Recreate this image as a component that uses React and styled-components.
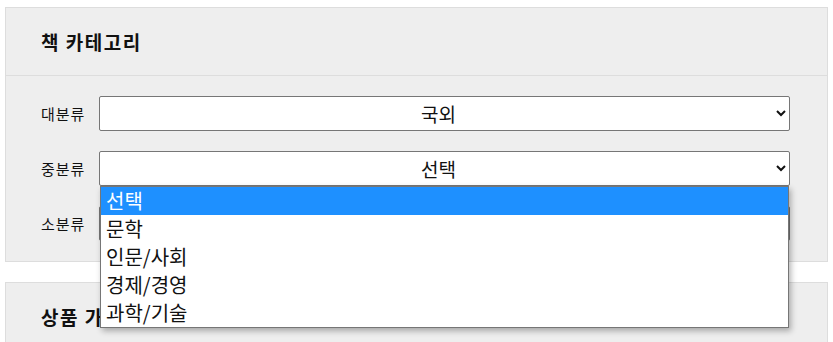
import React from 'react'
import styled, { createGlobalStyle } from 'styled-components'

const GlobalStyle = createGlobalStyle`
  body {
    margin: 0;
    background: #fff;
    font-family: "Noto Sans CJK KR", "Noto Sans", sans-serif;
    color: #111;
  }
`

const Page = styled.div`
  padding: 7px 5px 0 5px;
  display: flex;
  flex-direction: column;
  gap: 20px;
  height: 342px;
  box-sizing: border-box;
  overflow: hidden;
`

const Card = styled.section`
  background: #eeeeee;
  border: 1px solid #dddddd;
  flex-shrink: 0;
`

const CardHeader = styled.h2`
  margin: 0;
  height: 67px;
  display: flex;
  align-items: center;
  padding-left: 35px;
  font-size: 19px;
  letter-spacing: 1.5px;
  font-weight: 700;
  border-bottom: 1px solid #dddddd;
`

const CardBody = styled.div`
  padding: 20px 37px 20px 35px;
  display: flex;
  flex-direction: column;
  gap: 20px;
`

const Row = styled.div`
  display: flex;
  align-items: center;
  position: relative;
`

const Label = styled.label`
  width: 58px;
  font-size: 15px;
  letter-spacing: 1px;
  flex-shrink: 0;
`

const Select = styled.select`
  flex: 1;
  height: 35px;
  font-family: inherit;
  font-size: 19px;
  text-align: center;
  text-align-last: center;
  background: #fff;
  border: 1px solid #767676;
  border-radius: 2px;
  color: #111;
`

const Dropdown = styled.ul`
  position: absolute;
  top: 35px;
  left: 59px;
  right: 1px;
  margin: 0;
  padding: 0;
  list-style: none;
  background: #fff;
  border: 1px solid #767676;
  box-shadow: 2px 3px 6px rgba(0, 0, 0, 0.3);
  z-index: 2;
`

const Option = styled.li`
  height: 28px;
  line-height: 28px;
  padding-left: 5px;
  font-size: 20px;
  background: ${p => (p.$active ? '#1e90ff' : '#fff')};
  color: ${p => (p.$active ? '#fff' : '#111')};
`

const midOptions = ['선택', '문학', '인문/사회', '경제/경영', '과학/기술']

export default function App() {
  return (
    <>
      <GlobalStyle />
      <Page>
        <Card>
          <CardHeader>책 카테고리</CardHeader>
          <CardBody>
            <Row>
              <Label>대분류</Label>
              <Select defaultValue="국외">
                <option>국내</option>
                <option>국외</option>
              </Select>
            </Row>
            <Row>
              <Label>중분류</Label>
              <Select defaultValue="선택">
                {midOptions.map(o => (
                  <option key={o}>{o}</option>
                ))}
              </Select>
              <Dropdown>
                {midOptions.map((o, i) => (
                  <Option key={o} $active={i === 0}>{o}</Option>
                ))}
              </Dropdown>
            </Row>
            <Row>
              <Label>소분류</Label>
              <Select defaultValue="선택">
                <option>선택</option>
              </Select>
            </Row>
          </CardBody>
        </Card>
        <Card>
          <CardHeader>상품 가격</CardHeader>
        </Card>
      </Page>
    </>
  )
}
